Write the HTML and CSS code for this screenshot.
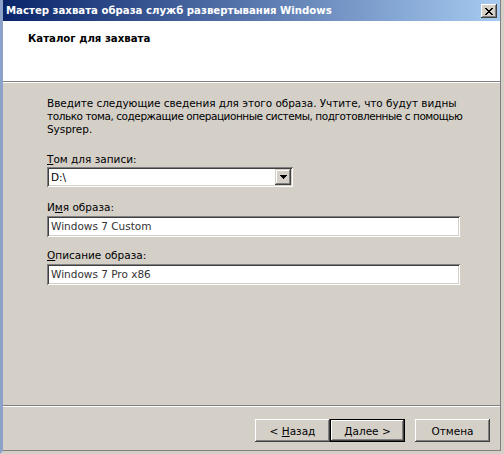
FILE: index.html
```html
<!DOCTYPE html>
<html lang="ru">
<head>
<meta charset="utf-8">
<title>Мастер захвата образа служб развертывания Windows</title>
<link rel="stylesheet" href="styles.css">
</head>
<body>
<div class="window">
  <div class="titlebar">
    <span class="title">Мастер захвата образа служб развертывания Windows</span>
    <button class="close" aria-label="Закрыть">
      <svg width="8" height="7" viewBox="0 0 8 7" shape-rendering="crispEdges">
        <path d="M0 0h2v1h-2zM6 0h2v1h-2zM1 1h2v1h-2zM5 1h2v1h-2zM2 2h4v1h-4zM3 3h2v1h-2zM2 4h4v1h-4zM1 5h2v1h-2zM5 5h2v1h-2zM0 6h2v1h-2zM6 6h2v1h-2z" fill="#000"/>
      </svg>
    </button>
  </div>
  <div class="header">
    <h1 class="header-title">Каталог для захвата</h1>
  </div>
  <div class="content">
    <p class="intro">Введите следующие сведения для этого образа. Учтите, что будут видны<br><span class="tight">только тома, содержащие операционные системы, подготовленные с помощью</span><br>Sysprep.</p>
    <label class="label label-first"><u>Т</u>ом для записи:</label>
    <div class="combo">
      <span class="combo-text">D:\</span>
      <span class="combo-btn">
        <svg width="7" height="4" viewBox="0 0 7 4" shape-rendering="crispEdges"><path d="M0 0h7v1h-7zM1 1h5v1h-5zM2 2h3v1h-3zM3 3h1v1h-1z" fill="#000"/></svg>
      </span>
    </div>
    <label class="label label-name">И<u>м</u>я образа:</label>
    <div class="textbox">Windows 7 Custom</div>
    <label class="label label-desc"><u>О</u>писание образа:</label>
    <div class="textbox">Windows 7 Pro x86</div>
  </div>
  <div class="footer">
    <div class="buttons">
      <button class="btn">&lt; <u>Н</u>азад</button>
      <button class="btn btn-default"><u>Д</u>алее &gt;</button>
      <button class="btn btn-cancel">Отмена</button>
    </div>
  </div>
</div>
</body>
</html>
```
FILE: styles.css
```css
* { box-sizing: border-box; }
html, body { margin: 0; padding: 0; }
body {
  width: 504px;
  height: 454px;
  overflow: hidden;
  background: #d4d0c8;
  font-family: "DejaVu Sans", sans-serif;
  font-size: 10.5px;
  color: #000;
}
.window {
  width: 504px;
  height: 454px;
  display: flex;
  flex-direction: column;
  background: #d4d0c8;
  border-left: 3px solid #8da2c8;
  border-right: 3px solid #d4d0c8;
  border-bottom: 3px solid #d4d0c8;
  box-shadow: inset -1px 0 #808080, inset 0 -1px #808080;
}
.titlebar {
  height: 21px;
  display: flex;
  align-items: center;
  justify-content: space-between;
  padding: 0 3px 0 3px;
  background: linear-gradient(to right, #0a246a, #a6caf0);
  margin-right: 1px;
}
.title {
  color: #fff;
  font-family: "DejaVu Sans Condensed", "DejaVu Sans", sans-serif;
  font-weight: bold;
  font-size: 11.3px;
  white-space: nowrap;
}
.close {
  width: 16px;
  height: 14px;
  padding: 0;
  border: 0;
  margin-top: 1px;
  background: #d4d0c8;
  display: flex;
  align-items: center;
  justify-content: center;
  box-shadow: inset -1px -1px #404040, inset 1px 1px #fff, inset -2px -2px #808080, inset 2px 2px #d4d0c8;
}
.header {
  height: 61px;
  background: #fff;
  padding: 11px 0 0 25px;
  margin-right: 1px;
  border-bottom: 1px solid #808080;
  box-shadow: 0 1px #fff;
}
.header-title {
  margin: 0;
  font-family: "DejaVu Sans Condensed", "DejaVu Sans", sans-serif;
  font-size: 11.3px;
  font-weight: bold;
  line-height: 13px;
}
.content {
  flex: 1;
  display: flex;
  flex-direction: column;
  align-items: flex-start;
  padding: 15px 0 0 44px;
}
.intro {
  margin: 0;
  width: 454px;
  line-height: 13px;
  letter-spacing: -0.05px;
  white-space: nowrap;
}
.tight { letter-spacing: -0.45px; }
.label {
  display: block;
  line-height: 13px;
}
.label-first { margin-top: 17px; margin-bottom: 1px; }
.label-name { margin-top: 14px; margin-bottom: 2px; }
.label-desc { margin-top: 12px; margin-bottom: 2px; }
.combo {
  width: 246px;
  height: 20px;
  background: #fff;
  display: flex;
  align-items: center;
  justify-content: space-between;
  padding: 2px;
  box-shadow: inset 1px 1px #808080, inset -1px -1px #fff, inset 2px 2px #404040, inset -2px -2px #d4d0c8;
}
.combo-text { padding-left: 2px; }
.combo-btn {
  width: 16px;
  height: 16px;
  background: #d4d0c8;
  display: flex;
  align-items: center;
  justify-content: center;
  box-shadow: inset -1px -1px #404040, inset 1px 1px #d4d0c8, inset -2px -2px #808080, inset 2px 2px #fff;
}
.textbox {
  width: 413px;
  height: 21px;
  background: #fff;
  padding: 2px 4px;
  line-height: 17px;
  color: #333;
  box-shadow: inset 1px 1px #808080, inset -1px -1px #fff, inset 2px 2px #404040, inset -2px -2px #d4d0c8;
}
.footer {
  border-top: 1px solid #808080;
  box-shadow: inset 0 1px #fff;
  margin-right: 1px;
  padding: 13px 10px 9px 0;
}
.buttons {
  display: flex;
  justify-content: flex-end;
}
.btn {
  width: 75px;
  height: 23px;
  padding: 0;
  border: 0;
  font-family: inherit;
  font-size: 10.5px;
  color: #000;
  background: #d4d0c8;
  box-shadow: inset -1px -1px #404040, inset 1px 1px #fff, inset -2px -2px #808080, inset 2px 2px #d4d0c8;
}
.btn-default {
  border: 1px solid #000;
  box-shadow: inset -1px -1px #404040, inset 1px 1px #fff, inset -2px -2px #808080, inset 2px 2px #d4d0c8;
}
.btn-cancel { margin-left: 10px; }
u { text-decoration: underline; text-underline-offset: 1px; }
```
